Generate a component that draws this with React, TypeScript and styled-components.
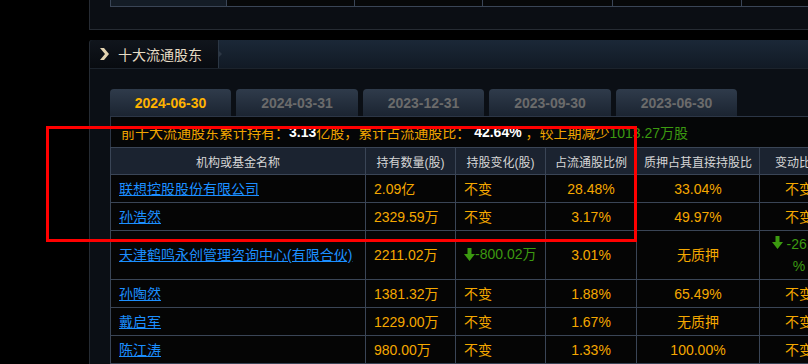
import React from 'react';
import styled, { createGlobalStyle } from 'styled-components';

const Global = createGlobalStyle`
  html, body { margin: 0; padding: 0; background: #000; }
  body { font-family: 'Liberation Sans', 'Noto Sans CJK SC', sans-serif; overflow: hidden; }
  * { box-sizing: border-box; }
`;

const Page = styled.div`
  width: 808px;
  height: 364px;
  overflow: hidden;
  position: relative;
  background: #000;
`;

const TopPanel = styled.div`
  margin-left: 89px;
  width: 760px;
  height: 30px;
  background: #0b0e14;
  border-left: 1px solid #262b33;
  border-bottom: 1px solid #262b33;
  padding-left: 20px;
`;

const TopCells = styled.div`
  display: flex;
  height: 7px;
  border-bottom: 1px solid #3a4556;
  border-left: 1px solid #3a4556;
`;

const TopCell = styled.div<{ $w: number; $hl?: boolean }>`
  flex: none;
  width: ${(p) => p.$w}px;
  background: ${(p) => (p.$hl ? '#141c26' : '#070809')};
  border-right: 1px solid #3a4556;
`;

const Panel = styled.section`
  margin-top: 10px;
  margin-left: 89px;
  width: 760px;
  background: #0b0f15;
  border-left: 1px solid #252b33;
  border-top-left-radius: 3px;
`;

const PanelHeader = styled.header`
  display: flex;
  height: 29px;
  border-bottom: 1px solid #1c232c;
  background: linear-gradient(#1b2837, #111a25);
  border-top-left-radius: 3px;
`;

const TitleTab = styled.div`
  position: relative;
  flex: none;
  width: 129px;
  display: flex;
  align-items: center;
  gap: 8px;
  padding-left: 9px;
  background: linear-gradient(#10151c, #080b10);
  border-right: 1px solid #2c3744;
  border-top-left-radius: 3px;
  color: #e6dcc4;
  font-size: 14px;
  &::after {
    content: '';
    position: absolute;
    right: -4px;
    top: 10px;
    width: 0;
    height: 0;
    border-top: 4px solid transparent;
    border-bottom: 4px solid transparent;
    border-left: 4px solid #2c3744;
  }
`;

const PanelBody = styled.div`
  padding: 20px 0 0 20px;
`;

const Tabs = styled.div`
  display: flex;
  gap: 5px;
`;

const Tab = styled.div<{ $active?: boolean; $w: number }>`
  flex: none;
  width: ${(p) => p.$w}px;
  height: 27px;
  display: flex;
  align-items: center;
  justify-content: center;
  border-radius: 4px 4px 0 0;
  background: linear-gradient(#2f3b4b, #1b2431);
  color: ${(p) => (p.$active ? '#ffb300' : '#6b6b6b')};
  font-weight: bold;
  font-size: 14px;
`;

const Summary = styled.div`
  height: 31px;
  display: flex;
  align-items: center;
  padding-left: 10px;
  background: #050607;
  border: 1px solid #2c3646;
  border-bottom: none;
  color: #f0a400;
  font-size: 14px;
  white-space: nowrap;
`;

const Strong = styled.b`
  color: #fff;
  font-weight: bold;
`;

const Green = styled.span`
  color: #3c9a10;
`;

const Table = styled.table`
  border-collapse: collapse;
  table-layout: fixed;
  width: 728px;
  font-size: 14px;
`;

const HeadCell = styled.th<{ $w: number }>`
  width: ${(p) => p.$w}px;
  height: 27px;
  padding: 0;
  background: #1b2330;
  border: 1px solid #3a4556;
  color: #d6d6d6;
  font-weight: normal;
  font-size: 12px;
  text-align: center;
  white-space: nowrap;
  overflow: hidden;
`;

const Row = styled.tr<{ $tall?: boolean }>`
  height: ${(p) => (p.$tall ? 49 : 28)}px;
`;

const Cell = styled.td<{ $center?: boolean }>`
  padding: 0 8px;
  background: #050505;
  border: 1px solid #3a4556;
  color: #f5a800;
  text-align: ${(p) => (p.$center ? 'center' : 'left')};
  white-space: nowrap;
  line-height: 22px;
`;

const WrapCell = styled(Cell)`
  padding: 0 4px;
  white-space: normal;
  color: #3c9a10;
`;

const Link = styled.a`
  color: #1c8fff;
  text-decoration: underline;
  cursor: pointer;
`;

const Down = styled.span`
  color: #3c9a10;
  display: inline-flex;
  align-items: center;
`;

const Overlay = styled.div`
  position: absolute;
  left: 46px;
  top: 126px;
  width: 591px;
  height: 116px;
  border: 3px solid #ff0000;
  pointer-events: none;
`;

const Chevron = () => (
  <svg width="11" height="12" viewBox="0 0 11 12">
    <path d="M1 0 L5 0 L10 6 L5 12 L1 12 L6 6 Z" fill="#e3d3b0" />
  </svg>
);

const ArrowDown = () => (
  <svg width="11" height="13" viewBox="0 0 11 13">
    <path d="M3.5 0 H7.5 V6 H11 L5.5 13 L0 6 H3.5 Z" fill="#3c9a10" />
  </svg>
);

type R = { name: string; qty: string; change: React.ReactNode; ratio: string; pledge: string; diff: React.ReactNode; tall?: boolean };

const rows: R[] = [
  { name: '联想控股股份有限公司', qty: '2.09亿', change: '不变', ratio: '28.48%', pledge: '33.04%', diff: '不变' },
  { name: '孙浩然', qty: '2329.59万', change: '不变', ratio: '3.17%', pledge: '49.97%', diff: '不变' },
  {
    name: '天津鹤鸣永创管理咨询中心(有限合伙)',
    qty: '2211.02万',
    change: (
      <Down>
        <ArrowDown />-800.02万
      </Down>
    ),
    ratio: '3.01%',
    pledge: '无质押',
    diff: (
      <>
        <ArrowDown /> -26.57
        <br />%
      </>
    ),
    tall: true,
  },
  { name: '孙陶然', qty: '1381.32万', change: '不变', ratio: '1.88%', pledge: '65.49%', diff: '不变' },
  { name: '戴启军', qty: '1229.00万', change: '不变', ratio: '1.67%', pledge: '无质押', diff: '不变' },
  { name: '陈江涛', qty: '980.00万', change: '不变', ratio: '1.33%', pledge: '100.00%', diff: '不变' },
];

const tabs = [
  { label: '2024-06-30', w: 121 },
  { label: '2024-03-31', w: 122 },
  { label: '2023-12-31', w: 121 },
  { label: '2023-09-30', w: 122 },
  { label: '2023-06-30', w: 121 },
];

export default function App() {
  return (
    <Page>
      <Global />
      <TopPanel>
        <TopCells>
          <TopCell $w={116} $hl />
          <TopCell $w={128} />
          <TopCell $w={128} />
          <TopCell $w={130} />
          <TopCell $w={129} />
          <TopCell $w={129} />
        </TopCells>
      </TopPanel>
      <Panel>
        <PanelHeader>
          <TitleTab>
            <Chevron />
            十大流通股东
          </TitleTab>
        </PanelHeader>
        <PanelBody>
          <Tabs>
            {tabs.map((t, i) => (
              <Tab key={t.label} $w={t.w} $active={i === 0}>
                {t.label}
              </Tab>
            ))}
          </Tabs>
          <Summary>
            前十大流通股东累计持有：<Strong>3.13</Strong>亿股，累计占流通股比：<Strong>&nbsp;42.64%&nbsp;</Strong>，较上期减少<Green>1013.27万股</Green>
          </Summary>
          <Table>
            <thead>
              <tr>
                <HeadCell $w={255}>机构或基金名称</HeadCell>
                <HeadCell $w={90}>持有数量(股)</HeadCell>
                <HeadCell $w={90}>持股变化(股)</HeadCell>
                <HeadCell $w={91}>占流通股比例</HeadCell>
                <HeadCell $w={123}>质押占其直接持股比</HeadCell>
                <HeadCell $w={79}>变动比例</HeadCell>
              </tr>
            </thead>
            <tbody>
              {rows.map((r) => (
                <Row key={r.name} $tall={r.tall}>
                  <Cell>
                    <Link>{r.name}</Link>
                  </Cell>
                  <Cell>{r.qty}</Cell>
                  <Cell>{r.change}</Cell>
                  <Cell $center>{r.ratio}</Cell>
                  <Cell $center>{r.pledge}</Cell>
                  {r.tall ? <WrapCell $center>{r.diff}</WrapCell> : <Cell $center>{r.diff}</Cell>}
                </Row>
              ))}
            </tbody>
          </Table>
        </PanelBody>
      </Panel>
      <Overlay />
    </Page>
  );
}
